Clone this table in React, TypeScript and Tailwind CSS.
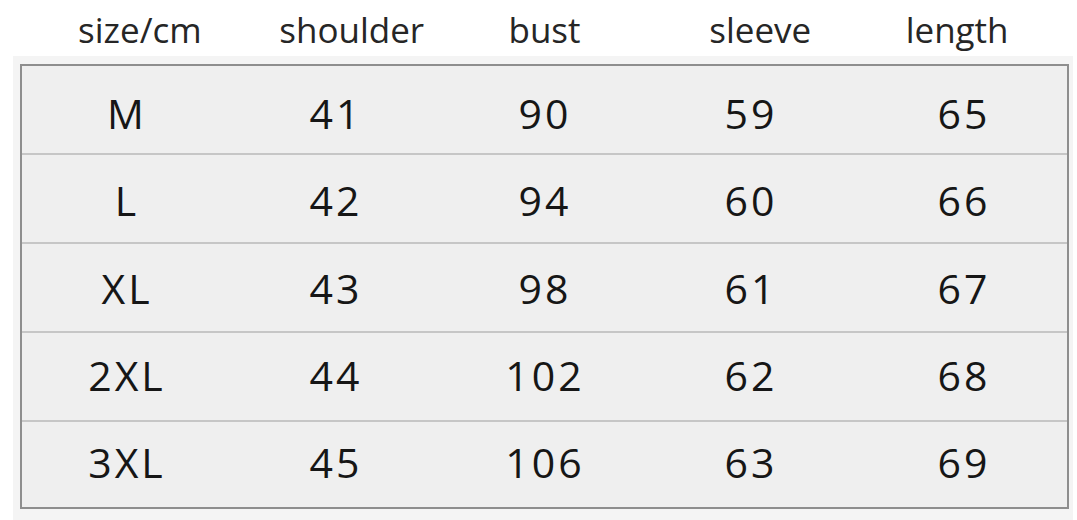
import React from 'react';

const headers = [
  { label: 'size/cm', cls: 'pl-[30px]' },
  { label: 'shoulder', cls: 'pl-[34px]' },
  { label: 'bust', cls: '' },
  { label: 'sleeve', cls: 'pl-[12px]' },
  { label: 'length', cls: 'pr-[14px]' },
];

const rows = [
  ['M', '41', '90', '59', '65'],
  ['L', '42', '94', '60', '66'],
  ['XL', '43', '98', '61', '67'],
  ['2XL', '44', '102', '62', '68'],
  ['3XL', '45', '106', '63', '69'],
];

// the text sits a little higher in each lower row
const rowPad = ['pt-[8px]', 'pt-[4px]', 'pt-[2px]', 'pb-[2px]', 'pb-[4px]'];
// small horizontal nudges per column
const colPad = ['pl-[1px]', 'pl-[1px]', 'pl-[1px]', 'pr-[5px]', 'pl-[3px]'];

const App: React.FC = () => {
  return (
    <div
      className="w-[1077px] h-[520px] bg-white overflow-hidden"
      style={{ fontFamily: '"Open Sans", "Noto Sans", sans-serif' }}
    >
      <div className="h-[56px] pl-[20px] pr-[8px] grid grid-cols-5 items-center text-[35px] leading-none text-[#262626]">
        {headers.map((h) => (
          <div key={h.label} className={`text-center pt-[2px] ${h.cls}`}>
            {h.label}
          </div>
        ))}
      </div>

      <div className="ml-[13px] mr-[4px] h-[464px] bg-[#f4f4f4] pt-[8px] pl-[7px] pr-[4px]">
        <div className="border-2 border-[#8e8e8e] bg-[#efefef]">
          {rows.map((r, i) => (
            <div
              key={r[0]}
              className={`grid grid-cols-5 items-center text-[41px] leading-none text-[#161616] ${
                i > 0 ? 'border-t-2 border-[#c6c6c6]' : ''
              } ${i > 0 && i < 4 ? 'h-[89px]' : 'h-[87px]'}`}
            >
              {r.map((c, j) => (
                <div key={j} className={`text-center tracking-[3px] ${colPad[j]} ${rowPad[i]}`}>
                  {c}
                </div>
              ))}
            </div>
          ))}
        </div>
      </div>
    </div>
  );
};

export default App;
